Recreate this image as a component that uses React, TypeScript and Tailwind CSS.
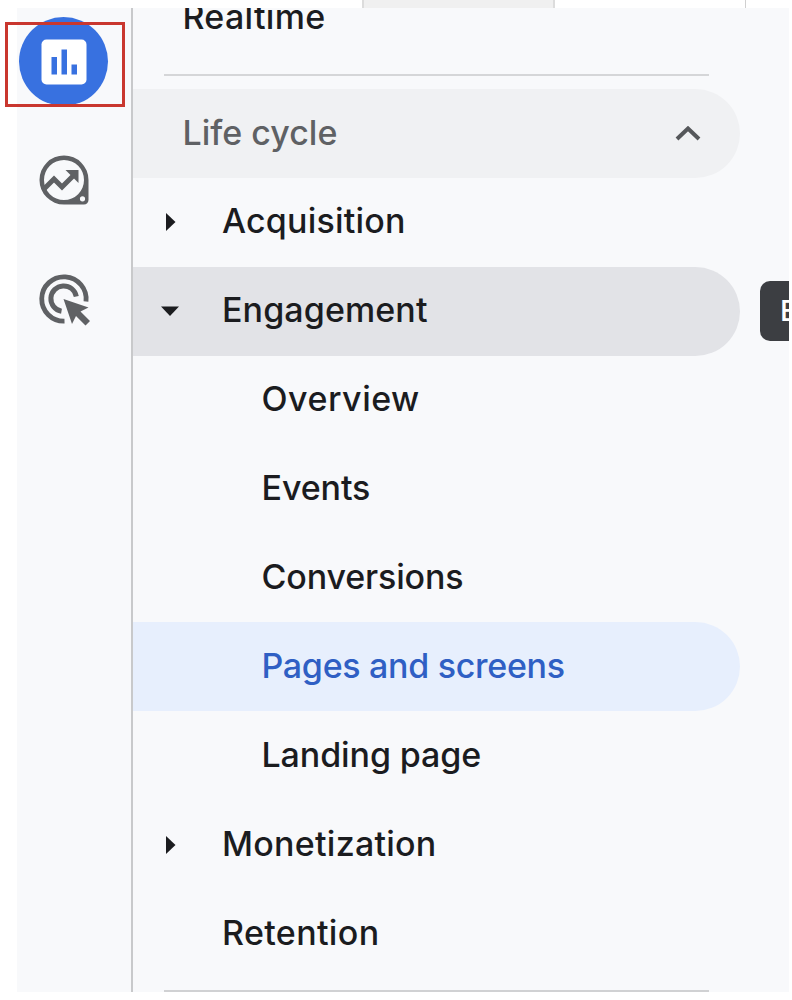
import { clsx } from 'clsx';

type NavItem = {
  label: string;
  level: 1 | 2;
  tracking: string;
  arrow?: 'right' | 'down';
  state?: 'open' | 'selected';
};

const items: NavItem[] = [
  { label: 'Acquisition', level: 1, tracking: 'tracking-[0.2px]', arrow: 'right' },
  { label: 'Engagement', level: 1, tracking: 'tracking-[0.1px]', arrow: 'down', state: 'open' },
  { label: 'Overview', level: 2, tracking: 'tracking-[0.5px]' },
  { label: 'Events', level: 2, tracking: 'tracking-[-0.1px]' },
  { label: 'Conversions', level: 2, tracking: 'tracking-[-0.15px]' },
  { label: 'Pages and screens', level: 2, tracking: 'tracking-[-0.3px]', state: 'selected' },
  { label: 'Landing page', level: 2, tracking: 'tracking-[-0.1px]' },
  { label: 'Monetization', level: 1, tracking: 'tracking-[0.25px]', arrow: 'right' },
  { label: 'Retention', level: 1, tracking: 'tracking-[0.35px]' },
];

const ReportsIcon = () => (
  <svg viewBox="0 0 46 46" className="h-[46px] w-[46px]">
    <rect x="0.5" y="0.5" width="45" height="45" rx="5" fill="#fff" />
    <path d="M10.5 18h5.500v17.500h-5.500zM20.5 10.5h5.500v25h-5.500zM30.500 25.5h5.500v10h-5.500z" fill="#3871e0" />
  </svg>
);

const ExploreIcon = () => (
  <svg viewBox="0 0 50 50" className="h-[50px] w-[50px]" fill="none">
    <path
      fillRule="evenodd"
      clipRule="evenodd"
      d="M25 0.5a24.5 24.5 0 0 0 0 49h20a4.5 4.5 0 0 0 4.500-4.500V25A24.500 24.500 0 0 0 25 0.5zM25 5a20 20 0 1 1 0 40a20 20 0 0 1 0-40zM43.500 41.2a2.6 2.6 0 1 1 0 5.200a2.600 2.600 0 0 1 0-5.200z"
      fill="#5f6164"
    />
    <path d="M4 35L15 24l8 8L36 19" stroke="#5f6164" strokeWidth="5" />
    <path d="M26.500 15H39.500v13l-4.500-4.500-4-4z" fill="#5f6164" />
  </svg>
);

const AdvertisingIcon = () => (
  <svg viewBox="0 0 50 50" className="h-[50px] w-[50px] overflow-visible" fill="none">
    <path d="M47 27.500A22.200 22.200 0 1 0 25.500 47.200" stroke="#5f6164" strokeWidth="4.800" />
    <path d="M37.300 22.500A12.800 12.800 0 1 0 22.500 37.300" stroke="#5f6164" strokeWidth="5" />
    <path d="M24.500 25l25 8.500-8 4L51 47l-4.500 4.500-9.500-9.500-4 8z" fill="#5f6164" />
  </svg>
);

const Arrow = ({ direction }: { direction: 'right' | 'down' }) => (
  <svg viewBox="0 0 20 20" className="-ml-px h-5 w-5" fill="#1b1c1f">
    {direction === 'right' ? <path d="M6 1v18l9.500-9z" /> : <path d="M1 5.500h18l-9 9.500z" />}
  </svg>
);

const NavRow = ({ item }: { item: NavItem }) => (
  <li
    className={clsx(
      'flex h-[88.9px] w-[607px] items-center rounded-r-full pl-7 font-medium',
      item.state === 'open' && 'bg-[#e2e3e7]',
      item.state === 'selected' ? 'bg-[#e7effd] text-[#2f5fc4]' : 'text-[#1b1c1f]',
    )}
  >
    <span className={clsx('flex items-center', item.level === 1 ? 'w-[61px]' : 'w-[100.500px]')}>
      {item.arrow && <Arrow direction={item.arrow} />}
    </span>
    <span className={clsx('whitespace-nowrap pb-[3px]', item.tracking)}>{item.label}</span>
  </li>
);

export default function App() {
  return (
    <div className="flex h-[1000px] w-[792px] flex-col overflow-hidden bg-white font-['Inter',sans-serif] text-[34px]">
      {/* Bottom edge of the page header */}
      <div className="flex h-2 shrink-0 pl-[362px]">
        <div className="w-[193px] border-x-2 border-[#dcdcdc] bg-[#f0f0f0]" />
        <div className="w-[191px] border-r border-[#d0d0d0]" />
      </div>

      <div className="relative ml-[17px] flex h-[984px] w-[772px] shrink-0 bg-[#f8f9fb]">
        <aside className="flex w-[116px] shrink-0 flex-col items-center border-r-2 border-[#c8c9cb] pr-5 pt-[9px]">
          <div className="-ml-px flex h-[89px] w-[89px] shrink-0 items-center justify-center rounded-full bg-[#3871e0]">
            <ReportsIcon />
          </div>
          <div className="mt-[49px]">
            <ExploreIcon />
          </div>
          <div className="mt-[69px]">
            <AdvertisingIcon />
          </div>
        </aside>

        <nav className="flex h-full min-w-0 flex-1 flex-col overflow-hidden">
          <div className="flex h-[66px] shrink-0 items-start pl-[49.5px] font-medium leading-[40px] text-[#1b1c1f]">
            <span className="-mt-[11px] tracking-[0.3px]">Realtime</span>
          </div>
          <hr className="ml-[31px] w-[545px] shrink-0 border-t-2 border-[#d5d6d8]" />
          <div className="mt-[13px] flex h-[89px] w-[607px] shrink-0 items-center justify-between rounded-r-full bg-[#f0f1f3] pl-[49.5px] pr-[39px] font-medium text-[#5f6164]">
            <span className="pb-[2px]">Life cycle</span>
            <svg viewBox="0 0 26 16" className="h-4 w-[26px]" fill="none">
              <path d="M2 13L13 2.500l11 10.500" stroke="#55575a" strokeWidth="4" />
            </svg>
          </div>
          <ul className="shrink-0">
            {items.map((item) => (
              <NavRow key={item.label} item={item} />
            ))}
          </ul>
          <hr className="ml-[31px] mt-[12px] w-[545px] shrink-0 border-t-2 border-[#d0d1d3]" />
        </nav>

        {/* Tooltip cut off by the panel edge */}
        <div className="absolute right-0 top-[273px] flex h-[60px] w-[29px] items-center overflow-hidden rounded-l-[10px] bg-[#3c3e42] pl-5 text-[29px] font-medium text-white">
          E
        </div>

        {/* Highlight around the reports button */}
        <div className="absolute -left-3 top-[14px] h-[85px] w-[120px] border-[3px] border-[#c9372f]" />
      </div>
    </div>
  );
}
